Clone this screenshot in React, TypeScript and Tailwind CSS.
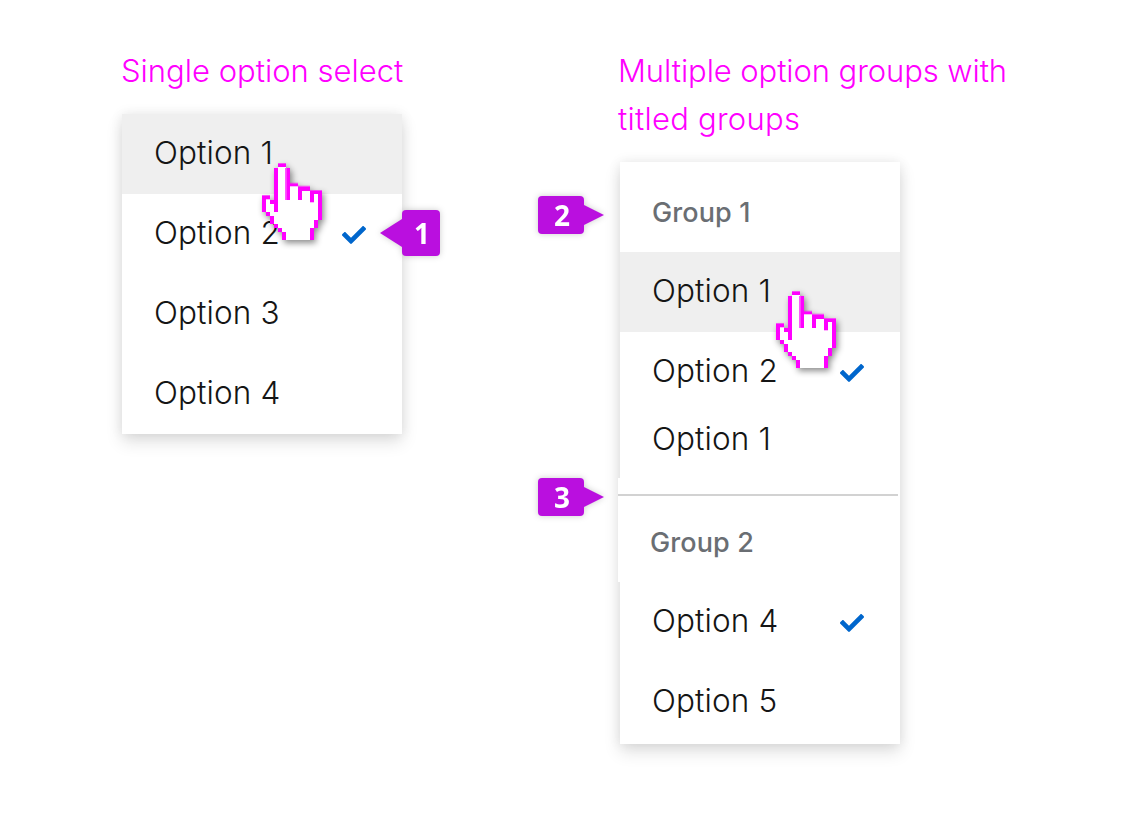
import type { ReactNode } from "react";
import { FaCheck } from "react-icons/fa";

function HandPointer({ className }: { className: string }) {
  return (
    <svg
      className={`absolute z-10 h-[78px] w-[60px] overflow-visible drop-shadow-[2px_3px_3px_rgba(0,0,0,0.45)] ${className}`}
      viewBox="36 36 180 234"
      aria-hidden="true"
    >
      <path
        fill="#fff"
        d="M84 42H108V54H120V102H144V110H180V122H216V210H204V234H192V270H96V246H84V234H72V222H60V198H48V186H36V138H60V150H72V54H84Z"
      />
      <g fill="#ff00ff">
        <path d="M84 42H108V51H84ZM72 54H84V186H72ZM109 54H120V150H109ZM120 102H144V108H120ZM144 111H180V123H156V150H144ZM180 123H216V210H204V132H192V156H180Z" />
        <path d="M36 138H60V147H48V186H36ZM60 150H72V162H60ZM48 186H60V198H48ZM60 198H72V222H60ZM72 222H84V234H72ZM84 234H96V246H84ZM96 246H108V270H96ZM192 210H204V234H192ZM180 234H192V270H180Z" />
      </g>
      <path
        fill="#ff00ff"
        opacity=".65"
        d="M84 39H108V42H84ZM105 54H109V150H105ZM120 98H144V102H120ZM144 107H180V111H144ZM180 120H216V123H180ZM36 135H60V138H36Z"
      />
      <path fill="#ff00ff" opacity=".3" d="M120 108H144V111H120ZM72 174H84V186H72ZM48 147H60V150H48ZM180 156H192V159H180Z" />
    </svg>
  );
}

function Option({ label, checked, hovered }: { label: string; checked?: boolean; hovered?: boolean }) {
  return (
    <li
      className={`flex h-20 items-center justify-between pl-[32px] pr-9 ${hovered ? "bg-[#efefef]" : ""}`}
    >
      <span className="pb-0.5 text-[31.5px] leading-10 tracking-[0.1px]">{label}</span>
      {checked && <FaCheck className="mt-0.5 size-6 text-[#0066cc]" />}
    </li>
  );
}

function GroupTitle({ children }: { children: ReactNode }) {
  return <h3 className="text-[27px] font-medium leading-10 tracking-[0.1px] text-[#6a6e73]">{children}</h3>;
}

function Marker({ label, className }: { label: string; className: string }) {
  return (
    <div className={`absolute left-[-82px] flex items-center drop-shadow-[0_0_3px_rgba(0,0,0,0.2)] ${className}`}>
      <span className="flex h-[38px] w-[46px] items-center justify-center rounded bg-[#ba0fdf] pl-0.5 font-['Noto_Sans',sans-serif] text-[28px] font-bold leading-none text-white">
        {label}
      </span>
      <svg className="h-5 w-5" viewBox="0 0 20 20" fill="#ba0fdf">
        <path d="M0 0L20 10L0 20Z" />
      </svg>
    </div>
  );
}

const menu = "relative w-[280px] bg-white shadow-[0_8px_16px_rgba(0,0,0,0.12),0_0_12px_rgba(0,0,0,0.08)]";

export default function App() {
  return (
    <main className="flex h-[822px] w-[1134px] bg-white pl-[122px] pt-[47px] font-['Inter',sans-serif] font-light text-[#151515]">
      <section className="w-[498px]">
        <h2 className="-ml-px mb-[19px] text-[31px] leading-[48px] text-[#ff00ff]">Single option select</h2>
        <div className={menu}>
          <ul>
            <Option label="Option 1" hovered />
            <Option label="Option 2" checked />
            <Option label="Option 3" />
            <Option label="Option 4" />
          </ul>
          <HandPointer className="left-[140.3px] top-[48px]" />
          <div className="absolute left-[258px] top-24 flex items-center drop-shadow-[0_0_3px_rgba(0,0,0,0.2)]">
            <svg className="h-7 w-[22px]" viewBox="0 0 22 28" fill="#ba0fdf">
              <path d="M22 0L0 14L22 28Z" />
            </svg>
            <span className="flex h-[46px] w-[38px] items-center justify-center rounded bg-[#ba0fdf] pl-0.5 font-['Noto_Sans',sans-serif] text-[28px] font-bold leading-none text-white">
              1
            </span>
          </div>
        </div>
      </section>

      <section>
        <h2 className="-ml-0.5 mb-[19px] w-[420px] text-[31px] leading-[48px] tracking-[-0.08px] text-[#ff00ff]">
          Multiple option groups with <span className="tracking-[0.25px]">titled groups</span>
        </h2>
        <div className={`${menu} pb-0.5`}>
          <div className="flex h-[90px] items-center pl-[32px] pt-3">
            <GroupTitle>Group 1</GroupTitle>
          </div>
          <div className="relative">
            <ul className="h-[226px]">
              <Option label="Option 1" hovered />
              <Option label="Option 2" checked />
              <li className="flex h-[55px] items-center pb-px pl-[32px] text-[31.5px] tracking-[0.1px]">Option 1</li>
            </ul>
            <HandPointer className="left-[156.3px] top-[38px]" />
          </div>
          <div className="-ml-0.5 h-[104px] w-[280px] bg-white pt-4">
            <div className="flex h-[88px] items-center border-t-2 border-[#d2d2d2] pl-[32px] pt-2">
              <GroupTitle>Group 2</GroupTitle>
            </div>
          </div>
          <ul>
            <Option label="Option 4" checked />
            <Option label="Option 5" />
          </ul>
          <Marker label="2" className="top-[34px]" />
          <Marker label="3" className="top-[316px]" />
        </div>
      </section>
    </main>
  );
}
